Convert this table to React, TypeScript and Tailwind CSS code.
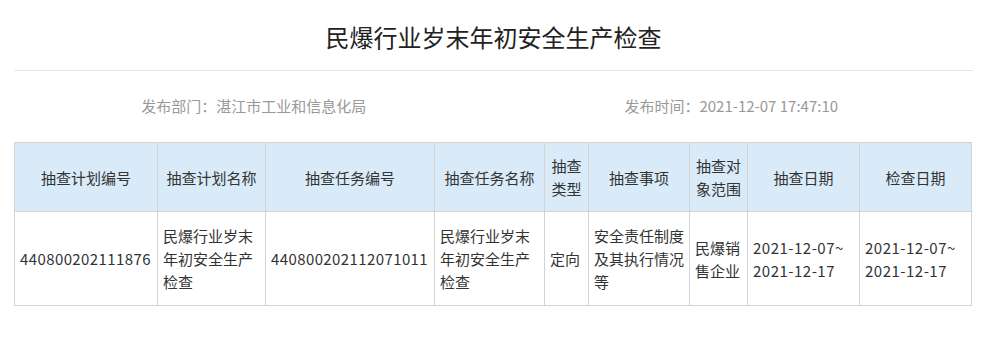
import React from "react";

const cols = [143, 108, 169, 110, 44, 101, 58, 112, 112];

const headers = [
  "抽查计划编号",
  "抽查计划名称",
  "抽查任务编号",
  "抽查任务名称",
  "抽查类型",
  "抽查事项",
  "抽查对象范围",
  "抽查日期",
  "检查日期",
];

export default function App() {
  const font = { fontFamily: '"Noto Sans CJK SC", "Noto Sans", sans-serif' };
  return (
    <div className="w-[989px] h-[350px] bg-white" style={font}>
      <div className="mx-[14px] w-[959px]">
        <div className="pt-[20px] h-[71px] border-b border-[#e6e6e6] text-center text-[24px] leading-[34px] text-[#222]">
          民爆行业岁末年初安全生产检查
        </div>
        <div className="flex h-[71px] items-center text-[15px] text-[#999]">
          <div className="w-1/2 text-center">发布部门：湛江市工业和信息化局</div>
          <div className="w-1/2 text-center pr-[4px]">发布时间：2021-12-07 17:47:10</div>
        </div>
        <table className="table-fixed border-collapse w-[958px] text-[15px] leading-[23px] text-[#333]">
          <colgroup>
            {cols.map((w, i) => (
              <col key={i} style={{ width: w }} />
            ))}
          </colgroup>
          <thead>
            <tr className="bg-[#d9ebf9]">
              {headers.map((h) => (
                <th
                  key={h}
                  className="border border-[#d3d3d3] px-[5px] py-[11px] font-normal text-center"
                >
                  {h}
                </th>
              ))}
            </tr>
          </thead>
          <tbody>
            <tr>
              <td className="border border-[#d3d3d3] px-[5px] py-3 tracking-[0.4px] whitespace-nowrap">440800202111876</td>
              <td className="border border-[#d3d3d3] px-[5px] py-3">民爆行业岁末年初安全生产检查</td>
              <td className="border border-[#d3d3d3] px-[5px] py-3 tracking-[0.4px] whitespace-nowrap">440800202112071011</td>
              <td className="border border-[#d3d3d3] px-[5px] py-3">民爆行业岁末年初安全生产检查</td>
              <td className="border border-[#d3d3d3] px-[5px] py-3">定向</td>
              <td className="border border-[#d3d3d3] px-[5px] py-3">安全责任制度及其执行情况等</td>
              <td className="border border-[#d3d3d3] px-[5px] py-3">民爆销售企业</td>
              <td className="border border-[#d3d3d3] px-[5px] py-3 tracking-[0.5px] whitespace-nowrap">
                2021-12-07~
                <br />
                2021-12-17
              </td>
              <td className="border border-[#d3d3d3] px-[5px] py-3 tracking-[0.5px] whitespace-nowrap">
                2021-12-07~
                <br />
                2021-12-17
              </td>
            </tr>
          </tbody>
        </table>
      </div>
    </div>
  );
}
